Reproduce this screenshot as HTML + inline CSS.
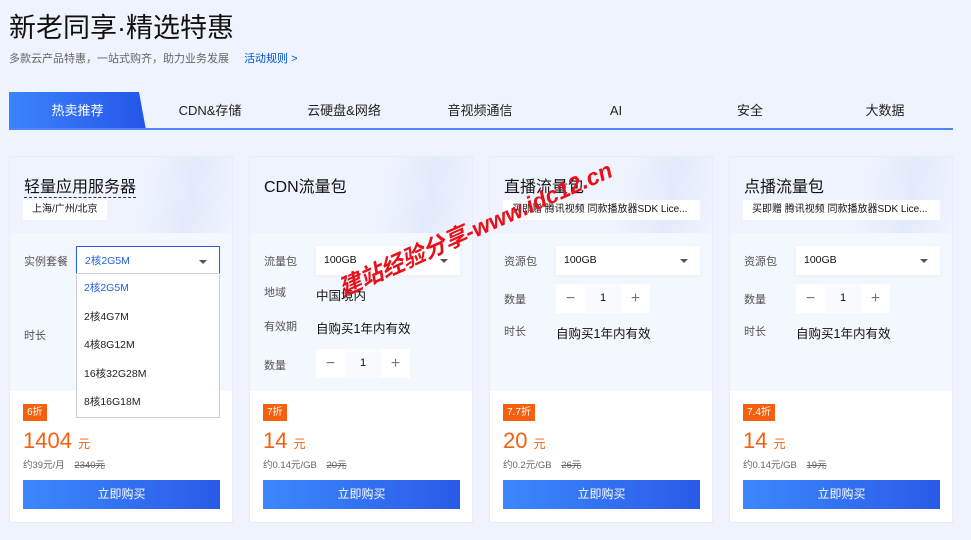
<!DOCTYPE html>
<html><head><meta charset="utf-8"><style>
*{box-sizing:border-box;margin:0;padding:0}
body{width:971px;height:540px;overflow:hidden;background:#eef3fd;font-family:"Liberation Sans","Noto Sans CJK SC",sans-serif;color:#222;position:relative}
.abs{position:absolute}
h1{position:absolute;left:9px;top:6px;font-size:27px;font-weight:400;color:#111;letter-spacing:0}
.sub{left:9px;top:50px;font-size:11px;color:#666}
.sub a{color:#0052d9;margin-left:12px}
.tabs{left:9px;top:92px;width:944px;height:38px;border-bottom:2px solid #4d86f7}
.tab{position:absolute;top:0;height:36px;line-height:38px;font-size:13px;color:#222;text-align:center;width:134px}
.act{left:0;width:137px;color:#fff;background:linear-gradient(90deg,#3c84fb,#2456e8);clip-path:polygon(0 0,130px 0,137px 38px,0 38px)}
.card{position:absolute;top:156px;width:224px;height:367px;background:#fff;border:1px solid #e6ecf8}
.top{height:76px;background:linear-gradient(100deg,#eef3fe 60%,#e3eafb 80%,#f0f4fe)}
.mid{height:158px;background:#f3f7fe}
.title{position:absolute;left:14px;top:16px;font-size:16px;color:#111}
.tag{position:absolute;left:13px;top:43px;height:20px;line-height:20px;background:#fff;font-size:10px;padding:0 9px;color:#111}
.lbl{position:absolute;left:14px;font-size:11px;color:#555}
.val{position:absolute;left:66px;font-size:12.5px;color:#111}
.sel{position:absolute;left:66px;width:144px;height:29px;background:#fff;font-size:10.5px;line-height:29px;padding-left:8px;color:#111;box-shadow:0 1px 4px rgba(0,40,120,.06)}
.sel:after{content:"";position:absolute;right:12px;top:13px;border:4px solid transparent;border-top-color:#555;border-bottom:0}
.num{position:absolute;left:66px;width:94px;height:29px;background:#fff;display:flex;font-size:11px;color:#111}
.num span{flex:1;text-align:center;line-height:29px;color:#777;font-size:16px}
.num b{font-weight:400;width:36px;text-align:center;line-height:29px;background:#fafbfe}
.disc{position:absolute;left:13px;top:247px;height:17px;line-height:17px;padding:0 4px;background:#f5600f;color:#fff;font-size:10px}
.price{position:absolute;left:13px;top:271px;color:#f5600f;font-size:22px}
.price small{font-size:12px}
.per{position:absolute;left:13px;top:300px;font-size:9.5px;color:#666}
.per s{margin-left:7px}
.btn{position:absolute;left:13px;top:323px;width:197px;height:29px;line-height:29px;text-align:center;color:#fff;font-size:12px;background:linear-gradient(90deg,#3b88fb,#2a5ae8)}
.dd{position:absolute;left:76px;top:273px;width:144px;height:145px;background:#fff;border:1px solid #ccd;font-size:10.5px;z-index:3}
.dd div{height:28.5px;line-height:28.5px;padding-left:7px;color:#222}
.wm{left:332px;top:272px;color:#e8101a;font-size:23px;font-weight:bold;font-style:italic;transform:rotate(-24deg);transform-origin:left top;white-space:nowrap;z-index:5}
</style></head><body>
<h1>新老同享·精选特惠</h1>
<div class="abs sub">多款云产品特惠，一站式购齐，助力业务发展 <a>活动规则 &gt;</a></div>
<div class="abs tabs">
<div class="tab act">热卖推荐</div>
<div class="tab" style="left:134px">CDN&amp;存储</div>
<div class="tab" style="left:268px">云硬盘&amp;网络</div>
<div class="tab" style="left:404px">音视频通信</div>
<div class="tab" style="left:540px">AI</div>
<div class="tab" style="left:674px">安全</div>
<div class="tab" style="left:809px">大数据</div>
</div>

<div class="card" style="left:9px"><div class="top"></div><div class="mid"></div>
<div class="title" style="border-bottom:1px dashed #333">轻量应用服务器</div><div class="tag">上海/广州/北京</div>
<div class="lbl" style="top:96px">实例套餐</div>
<div class="sel" style="top:89px;border:1px solid #2560e0;color:#2560e0">2核2G5M</div>
<div class="lbl" style="top:170px">时长</div>
<div class="disc">6折</div><div class="price">1404 <small>元</small></div><div class="per">约39元/月 <s>2340元</s></div><div class="btn">立即购买</div></div>
<div class="dd"><div style="color:#2560e0">2核2G5M</div><div>2核4G7M</div><div>4核8G12M</div><div>16核32G28M</div><div>8核16G18M</div></div>

<div class="card" style="left:249px"><div class="top"></div><div class="mid"></div>
<div class="title">CDN流量包</div>
<div class="lbl" style="top:96px">流量包</div><div class="sel" style="top:89px">100GB</div>
<div class="lbl" style="top:127px">地域</div><div class="val" style="top:128px">中国境内</div>
<div class="lbl" style="top:161px">有效期</div><div class="val" style="top:161px">自购买1年内有效</div>
<div class="lbl" style="top:200px">数量</div><div class="num" style="top:192px"><span>−</span><b>1</b><span>+</span></div>
<div class="disc">7折</div><div class="price">14 <small>元</small></div><div class="per">约0.14元/GB <s>20元</s></div><div class="btn">立即购买</div></div>

<div class="card" style="left:489px"><div class="top"></div><div class="mid"></div>
<div class="title">直播流量包</div><div class="tag" style="width:197px">买即赠 腾讯视频 同款播放器SDK Lice...</div>
<div class="lbl" style="top:96px">资源包</div><div class="sel" style="top:89px">100GB</div>
<div class="lbl" style="top:134px">数量</div><div class="num" style="top:127px"><span>−</span><b>1</b><span>+</span></div>
<div class="lbl" style="top:166px">时长</div><div class="val" style="top:166px">自购买1年内有效</div>
<div class="disc">7.7折</div><div class="price">20 <small>元</small></div><div class="per">约0.2元/GB <s>26元</s></div><div class="btn">立即购买</div></div>

<div class="card" style="left:729px"><div class="top"></div><div class="mid"></div>
<div class="title">点播流量包</div><div class="tag" style="width:197px">买即赠 腾讯视频 同款播放器SDK Lice...</div>
<div class="lbl" style="top:96px">资源包</div><div class="sel" style="top:89px">100GB</div>
<div class="lbl" style="top:134px">数量</div><div class="num" style="top:127px"><span>−</span><b>1</b><span>+</span></div>
<div class="lbl" style="top:166px">时长</div><div class="val" style="top:166px">自购买1年内有效</div>
<div class="disc">7.4折</div><div class="price">14 <small>元</small></div><div class="per">约0.14元/GB <s>19元</s></div><div class="btn">立即购买</div></div>

<div class="abs wm">建站经验分享-www.idc12.cn</div>
</body></html>
